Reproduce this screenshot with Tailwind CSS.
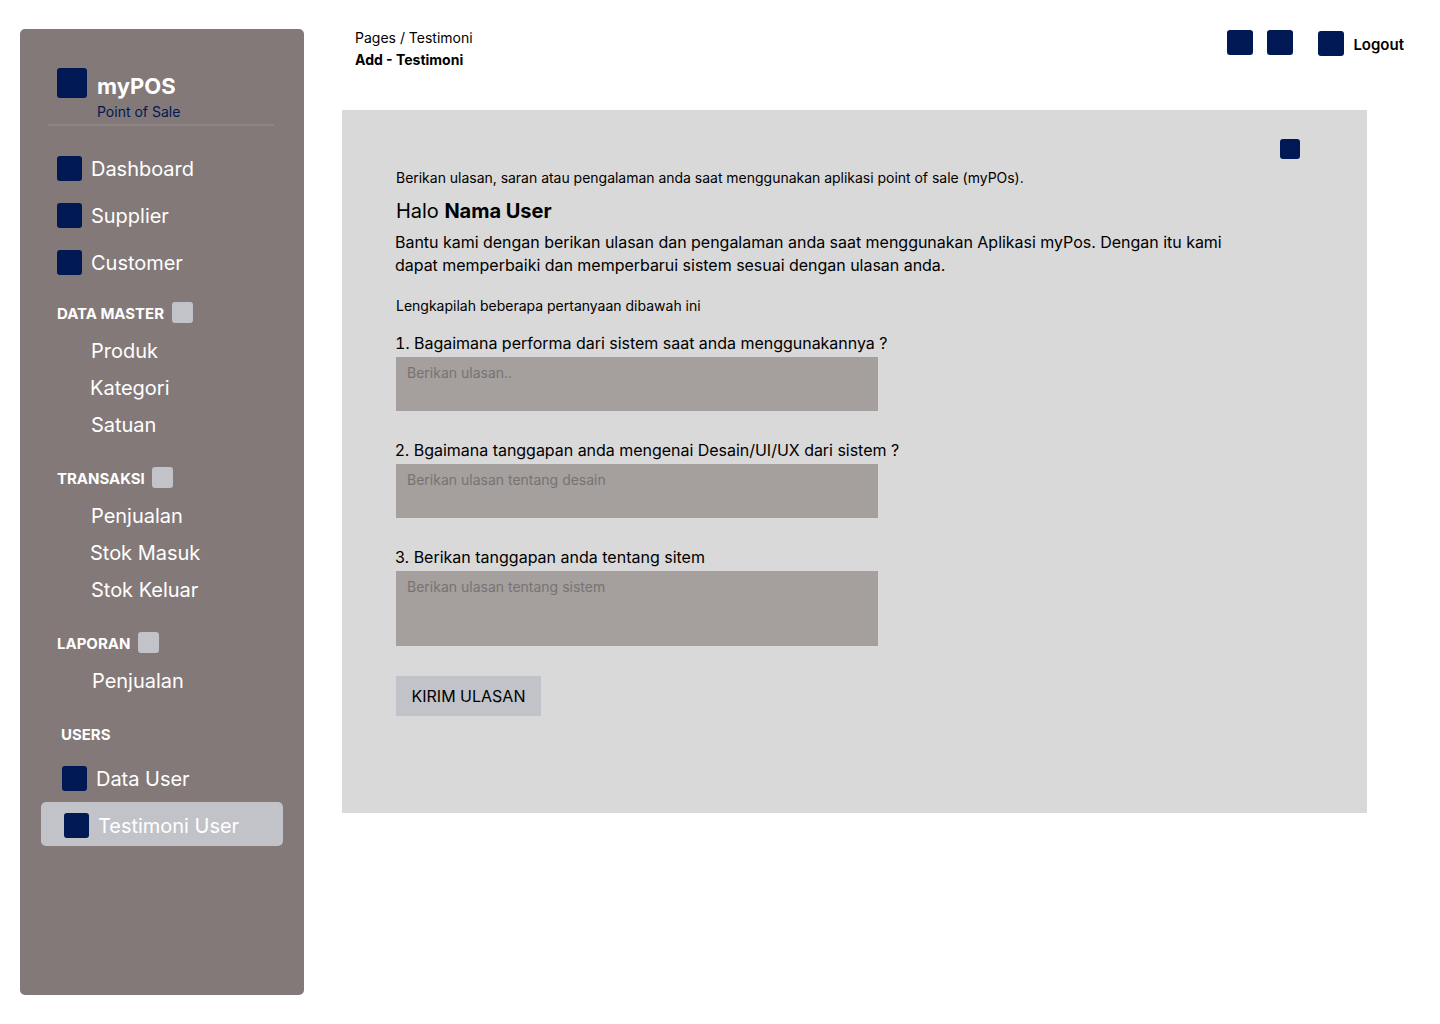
<!DOCTYPE html>
<html lang="id">
<head>
<meta charset="utf-8">
<title>myPOS - Add Testimoni</title>
<script src="https://cdn.jsdelivr.net/npm/@tailwindcss/browser@4"></script>
</head>
<body class="bg-white font-['Inter',sans-serif] text-black">
<div class="flex h-[1024px] w-[1440px] overflow-hidden">
  <aside class="ml-5 mt-[29px] flex h-[966px] w-[284px] shrink-0 flex-col rounded-[5px] bg-[#837978] text-white">
    <div class="ml-[37px] mt-[39px] flex h-[56px] gap-[10px]">
      <span class="size-[30px] rounded-[3px] bg-[#001854]"></span>
      <div class="flex flex-col pt-1">
        <span class="h-[29px] text-[22px] font-bold leading-[29px]">myPOS</span>
        <span class="mt-[2px] text-sm leading-[17px] text-[#001854]">Point of Sale</span>
      </div>
    </div>
    <div class="ml-[28px] h-[2px] w-[226px] bg-[#8f8584]"></div>

    <nav class="flex flex-col text-xl leading-6 font-normal tracking-[-0.02px]">
      <ul class="ml-[37px] mt-[30px] flex flex-col gap-[22px]">
        <li class="flex h-[25px] items-center gap-[9px]"><span class="size-[25px] rounded-[3px] bg-[#001854]"></span>Dashboard</li>
        <li class="flex h-[25px] items-center gap-[9px]"><span class="size-[25px] rounded-[3px] bg-[#001854]"></span>Supplier</li>
        <li class="flex h-[25px] items-center gap-[9px]"><span class="size-[25px] rounded-[3px] bg-[#001854]"></span>Customer</li>
      </ul>

      <h2 class="ml-[37px] mt-[27px] flex h-[21px] gap-2 text-[15px] font-bold leading-[23px]">DATA MASTER<span class="size-[21px] rounded-[3px] bg-[#c1c3c9]"></span></h2>
      <ul class="ml-[70px] mt-4 flex flex-col gap-[13px]">
        <li class="pl-px">Produk</li>
        <li>Kategori</li>
        <li class="pl-px">Satuan</li>
      </ul>

      <h2 class="ml-[37px] mt-[30px] flex h-[21px] gap-[7px] text-[15px] font-bold leading-[23px]">TRANSAKSI<span class="size-[21px] rounded-[3px] bg-[#c1c3c9]"></span></h2>
      <ul class="ml-[70px] mt-4 flex flex-col gap-[13px]">
        <li class="pl-px">Penjualan</li>
        <li>Stok Masuk</li>
        <li class="pl-px">Stok Keluar</li>
      </ul>

      <h2 class="ml-[37px] mt-[30px] flex h-[21px] gap-2 text-[15px] font-bold leading-[23px]">LAPORAN<span class="size-[21px] rounded-[3px] bg-[#c1c3c9]"></span></h2>
      <ul class="ml-[72px] mt-4">
        <li>Penjualan</li>
      </ul>

      <h2 class="ml-[41px] mt-[30px] h-[21px] text-[15px] font-bold leading-[23px]">USERS</h2>
      <ul class="ml-[21px] mt-[22px] flex flex-col gap-[11px]">
        <li class="ml-[21px] flex h-[25px] items-center gap-[9px]"><span class="size-[25px] rounded-[3px] bg-[#001854]"></span>Data User</li>
        <li class="flex h-[44px] w-[242px] items-center gap-[9px] rounded-[5px] bg-[#c1c3c9] pl-[23px] pt-[3px]"><span class="size-[25px] rounded-[3px] bg-[#001854]"></span>Testimoni User</li>
      </ul>
    </nav>
  </aside>

  <div class="ml-[38px] flex w-[1098px] flex-col">
    <header class="flex h-[110px] justify-between pl-[13px]">
      <div class="mt-[27px] flex flex-col text-sm leading-[22px]">
        <span>Pages / Testimoni</span>
        <span class="font-bold">Add - Testimoni</span>
      </div>
      <div class="mr-[36px] mt-[30px] flex items-start">
        <span class="h-[25px] w-[26px] rounded-[3px] bg-[#001854]"></span>
        <span class="ml-[14px] h-[25px] w-[26px] rounded-[3px] bg-[#001854]"></span>
        <span class="ml-[25px] mt-px h-[25px] w-[26px] rounded-[3px] bg-[#001854]"></span>
        <span class="ml-[9px] mt-[5px] text-[15px] font-semibold leading-5">Logout</span>
      </div>
    </header>

    <main class="relative h-[703px] w-[1025px] bg-[#d9d9d9] pl-[54px] pt-[59px]">
      <span class="absolute right-[67px] top-[29px] size-5 rounded-[3px] bg-[#001854]"></span>
      <p class="text-sm leading-[17px] tracking-[-0.02px]">Berikan ulasan, saran atau pengalaman anda saat menggunakan aplikasi point of sale (myPOs).</p>
      <h1 class="mt-[13px] text-xl leading-6 tracking-[-0.03px]">Halo <b class="font-bold">Nama User</b></h1>
      <p class="-ml-px mt-2 w-[850px] text-base leading-[23px] tracking-[-0.025px]">Bantu kami dengan berikan ulasan dan pengalaman anda saat menggunakan Aplikasi myPos. Dengan itu kami<br>dapat memperbaiki dan memperbarui sistem sesuai dengan ulasan anda.</p>
      <p class="mt-5 text-sm leading-[17px]">Lengkapilah beberapa pertanyaan dibawah ini</p>

      <form class="mt-5 flex flex-col items-start">
        <label class="-ml-px flex text-base leading-[19px] tracking-[-0.02px]"><span class="w-[19px]"><span class="tabular-nums">1</span>.</span>Bagaimana performa dari sistem saat anda menggunakannya ?</label>
        <div class="mt-1 h-[54px] w-[482px] bg-[#a59f9e] pl-[11px] pt-[7px] text-sm leading-[17px] text-[#787372]">Berikan ulasan..</div>
        <label class="-ml-px mt-[30px] text-base leading-[19px] tracking-[-0.025px]">2. Bgaimana tanggapan anda mengenai Desain/UI/UX dari sistem ?</label>
        <div class="mt-1 h-[54px] w-[482px] bg-[#a59f9e] pl-[11px] pt-[7px] text-sm leading-[17px] text-[#787372]">Berikan ulasan tentang desain</div>
        <label class="-ml-px mt-[30px] text-base leading-[19px]">3. Berikan tanggapan anda tentang sitem</label>
        <div class="mt-1 h-[75px] w-[482px] bg-[#a59f9e] pl-[11px] pt-[7px] text-sm leading-[17px] text-[#787372]">Berikan ulasan tentang sistem</div>
        <button type="button" class="mt-[30px] h-10 w-[145px] bg-[#c1c3c9] text-base">KIRIM ULASAN</button>
      </form>
    </main>
  </div>
</div>
</body>
</html>
